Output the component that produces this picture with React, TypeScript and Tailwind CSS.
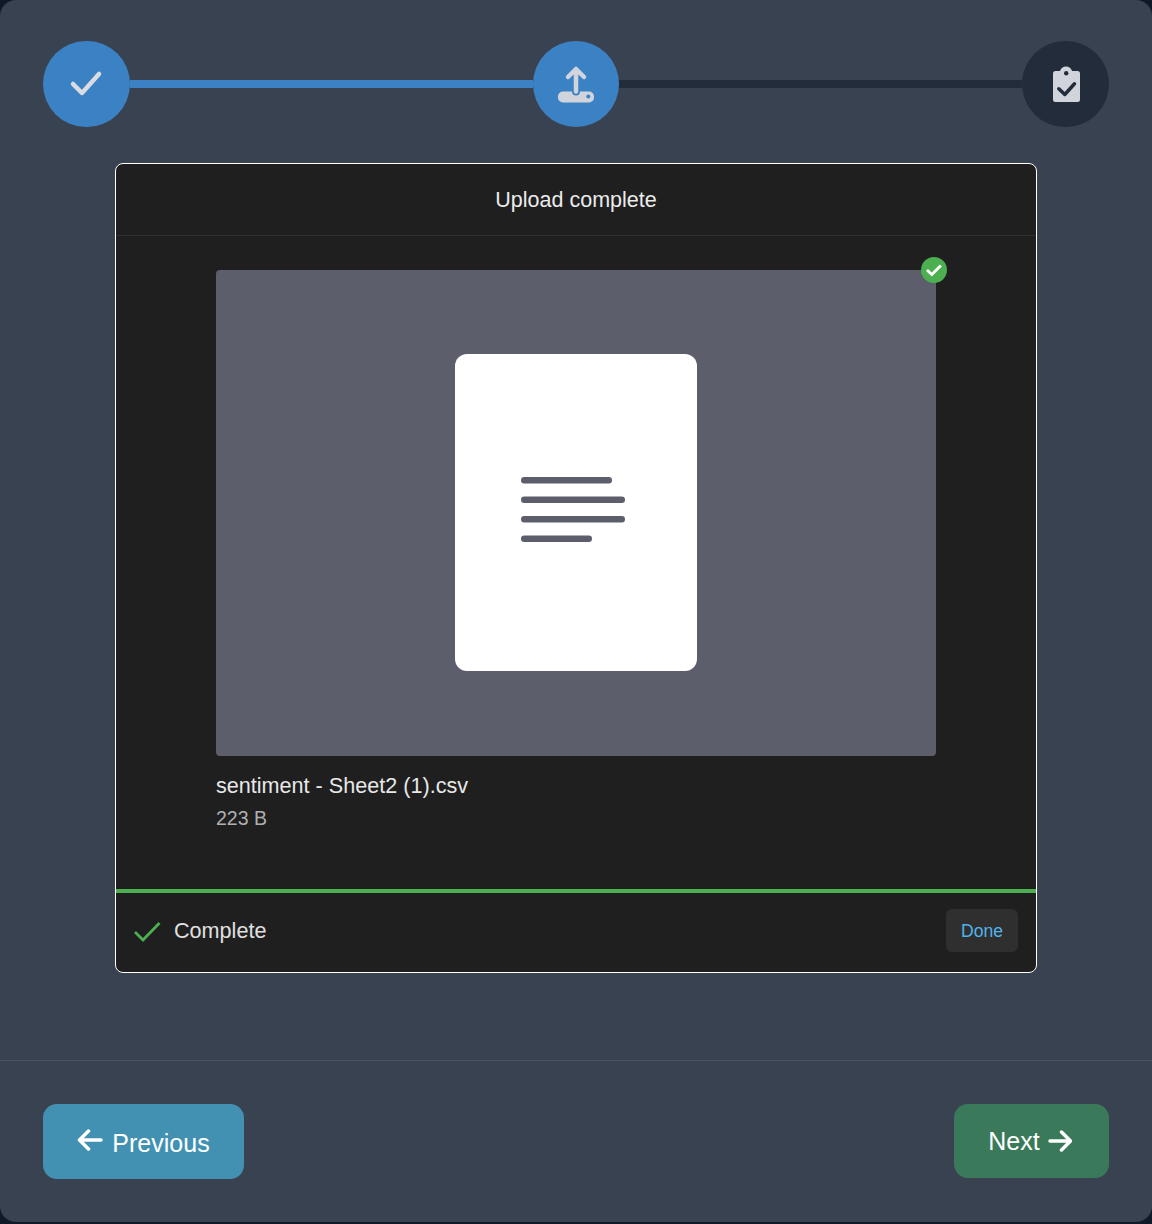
export default function App() {
  return (
    <div className="h-[1224px] bg-[#111827] font-['Liberation_Sans',Arial,sans-serif]">
      <div className="flex h-[1222px] flex-col rounded-2xl bg-[#394250]">
        <Stepper />
        <UploadCard />
        <Footer />
      </div>
    </div>
  );
}

function Stepper() {
  return (
    <div className="flex items-center px-[43px] pt-[41px]">
      <div className="flex h-[86px] w-[87px] items-center justify-center rounded-full bg-[#3b82c4]">
        <svg width="40" height="40" viewBox="0 0 40 40" fill="none" stroke="#d9dce3" strokeWidth="4.500" strokeLinecap="round" strokeLinejoin="round" className="mt-[-2px]">
          <path d="M6 21l9 9L32 11" />
        </svg>
      </div>
      <div className="h-2 flex-1 bg-[#3b82c4]" />
      <div className="flex h-[86px] w-[86px] items-center justify-center rounded-full bg-[#3b82c4]">
        <svg width="40" height="40" viewBox="0 0 40 40" fill="none">
          <rect x="2" y="27.500" width="36" height="11" rx="5" fill="#d1d5db" />
          <path d="M20 25v2.500" stroke="#3b82c4" strokeWidth="8" strokeLinecap="round" />
          <path d="M20 5.500v22M12 13l8-8 8 8" stroke="#d1d5db" strokeWidth="4.500" strokeLinecap="round" strokeLinejoin="round" />
          <circle cx="32.300" cy="32.500" r="2" fill="#3b82c4" />
        </svg>
      </div>
      <div className="h-2 flex-1 bg-[#232c3a]" />
      <div className="flex h-[86px] w-[87px] items-center justify-center rounded-full bg-[#232c3a]">
        <svg width="40" height="40" viewBox="0 0 40 40" fill="none">
          <path
            d="M9.500 7h4.500c1-3 3-4.500 6-4.500s5 1.500 6 4.500h5.500a2.500 2.500 0 0 1 2.500 2.500v26a2.500 2.500 0 0 1-2.500 2.500H9.500A2.500 2.500 0 0 1 7 35.500v-26A2.500 2.500 0 0 1 9.500 7z"
            fill="#d1d5db"
          />
          <circle cx="20.200" cy="9.200" r="2.200" fill="#232c3a" />
          <path d="M12.800 24.800l6 5.700 9.700-10.700" stroke="#232c3a" strokeWidth="3.500" strokeLinecap="round" strokeLinejoin="round" />
        </svg>
      </div>
    </div>
  );
}

function UploadCard() {
  return (
    <div className="mx-auto mt-9 flex h-[810px] w-[922px] flex-col rounded-lg border border-white bg-[#1f1f1f]">
      <div className="flex h-[72px] shrink-0 items-center justify-center border-b border-[#2f2f2f] pt-[2px] text-[21.500px] text-[#ebebeb]">
        Upload complete
      </div>
      <div className="flex-1 px-[100px] pt-[34px]">
        <div className="relative flex h-[486px] items-center justify-center rounded bg-[#5c5e6b] pb-[2px]">
          <div className="flex h-[317px] w-[242px] items-center justify-center rounded-xl bg-white pb-[4px] pr-[6px]">
            <svg width="104" height="66" viewBox="0 0 104 66" fill="#5c5e6b">
              <rect x="0" y="0" width="91" height="6.500" rx="3.250" />
              <rect x="0" y="19.500" width="104" height="6.500" rx="3.250" />
              <rect x="0" y="39" width="104" height="6.500" rx="3.250" />
              <rect x="0" y="58.500" width="71" height="6.500" rx="3.250" />
            </svg>
          </div>
          <div className="absolute right-[-11px] top-[-13px] flex h-[26px] w-[26px] items-center justify-center rounded-full bg-[#4caf50]">
            <svg width="16" height="16" viewBox="0 0 16 16" fill="none" stroke="#fff" strokeWidth="2.800">
              <path d="M1 8l4.800 4.500 9-9" />
            </svg>
          </div>
        </div>
        <div className="mt-[16px] text-[21.600px] leading-[28px] text-[#e8e8e8]">sentiment - Sheet2 (1).csv</div>
        <div className="mt-[5px] text-[19.500px] leading-[26px] text-[#b0b0b0]">223 B</div>
      </div>
      <div className="h-1 shrink-0 bg-[#4caf50]" />
      <div className="flex h-[79px] shrink-0 items-center justify-between pl-[17px] pr-[18px]">
        <div className="flex items-center gap-[13px] text-[21.600px] text-[#e0e0e0]">
          <svg width="28" height="24" viewBox="0 0 28 24" fill="none" stroke="#4caf50" strokeWidth="2.800" className="mt-[-1px]">
            <path d="M2 12l8 8L26.500 3" />
          </svg>
          <span className="mb-[2px]">Complete</span>
        </div>
        <div className="mb-[4px] flex h-[43px] w-[72px] items-center justify-center rounded-md bg-[#2f2f2f] pt-[2px] text-[17.600px] text-[#52b3ea]">
          Done
        </div>
      </div>
    </div>
  );
}

function Footer() {
  return (
    <div className="mt-[87px] flex items-start justify-between border-t border-[#4b5361] px-[43px] pt-[43px]">
      <button className="flex h-[75px] w-[201px] items-center justify-center gap-[9px] rounded-[14px] bg-[#4291b3] text-[25px] text-white">
        <svg width="26" height="22" viewBox="0 0 26 22" fill="none" stroke="#fff" strokeWidth="3.500" strokeLinecap="round" strokeLinejoin="round" className="mt-[-3px]">
          <path d="M24 11H3M11.500 2L2.500 11l9 9" />
        </svg>
        <span className="mt-[4px]">Previous</span>
      </button>
      <button className="flex h-[74px] w-[155px] items-center justify-center gap-2 rounded-[14px] bg-[#3a7a5a] pr-[3px] text-[25px] text-white">
        <span className="mt-[2px]">Next</span>
        <svg width="24" height="22" viewBox="0 0 24 22" fill="none" stroke="#fff" strokeWidth="3.500" strokeLinecap="round" strokeLinejoin="round">
          <path d="M2 11h20M13.500 2l9 9-9 9" />
        </svg>
      </button>
    </div>
  );
}
